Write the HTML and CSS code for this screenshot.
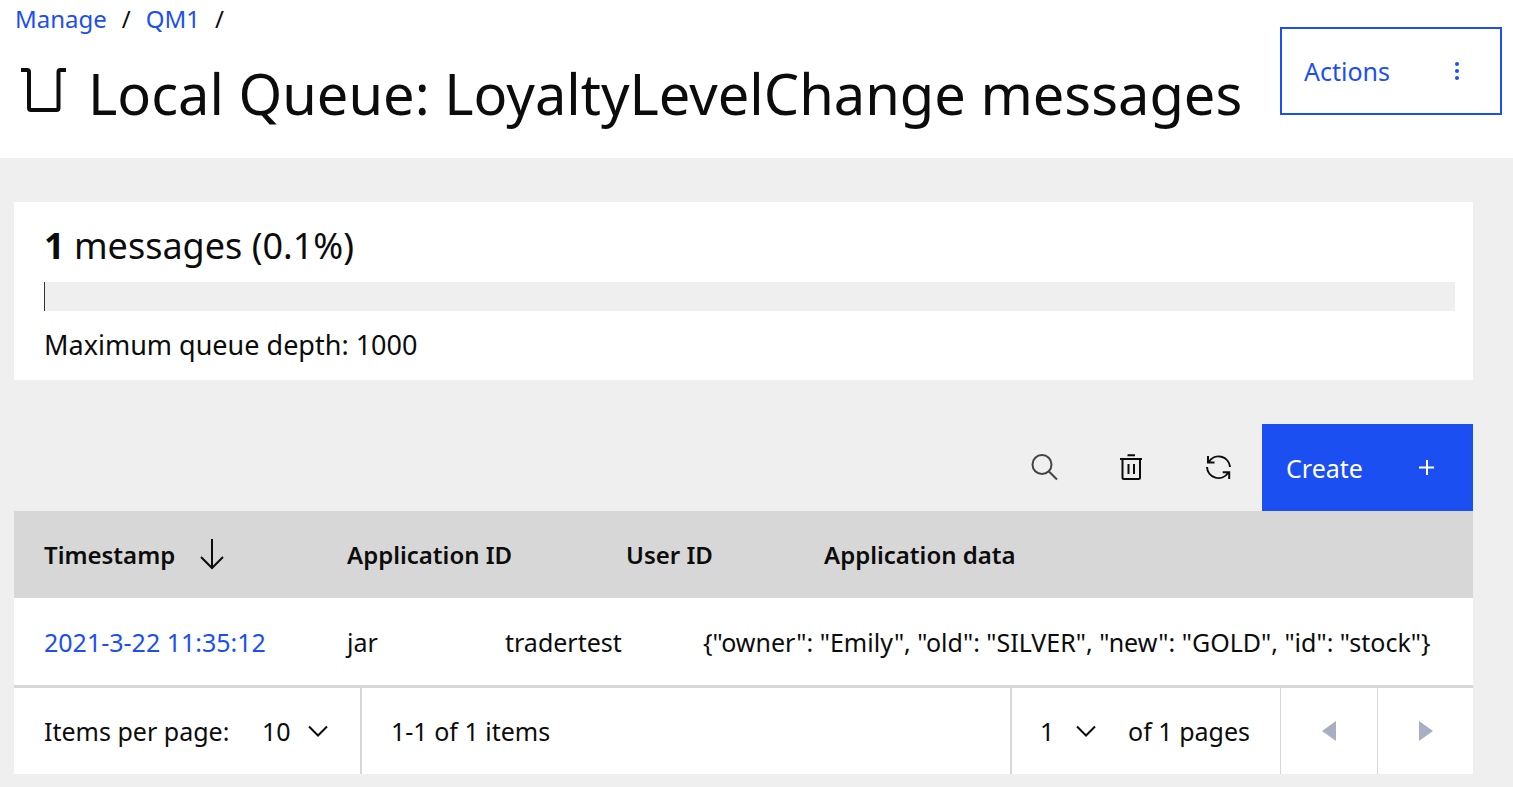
FILE: index.html
```html
<!DOCTYPE html>
<html lang="en">
<head>
<meta charset="utf-8">
<meta name="viewport" content="width=device-width, initial-scale=1">
<title>Local Queue: LoyaltyLevelChange messages</title>
<link rel="stylesheet" href="styles.css">
</head>
<body>
<header class="page-header">
  <div class="heading">
    <nav class="breadcrumb" aria-label="Breadcrumb">
      <a href="#manage">Manage</a><span class="slash">/</span><a href="#qm1">QM1</a><span class="slash">/</span>
    </nav>
    <div class="title-row">
      <svg class="queue-icon" viewBox="0 0 46 46" aria-hidden="true"><path d="M0 2H6Q8 2 8 4V40Q8 42 10 42H35.500Q37.500 42 37.500 40V4Q37.500 2 39.500 2H45" fill="none" stroke="currentColor" stroke-width="4"/></svg>
      <h1>Local Queue: LoyaltyLevelChange messages</h1>
    </div>
  </div>
  <button class="btn btn-outline" type="button">Actions
    <svg class="dots-icon" viewBox="0 0 6 20" aria-hidden="true"><circle cx="3" cy="3" r="2"/><circle cx="3" cy="10" r="2"/><circle cx="3" cy="17" r="2"/></svg>
  </button>
</header>
<main class="content">
  <section class="depth-card">
    <p class="depth-count"><strong>1</strong> messages (0.1%)</p>
    <div class="bar" role="meter" aria-label="Queue depth" aria-valuemin="0" aria-valuemax="1000" aria-valuenow="1"><div class="bar-fill" style="width: 0.1%"></div></div>
    <p class="depth-max">Maximum queue depth: 1000</p>
  </section>
  <div class="toolbar">
    <button class="icon-btn" type="button" aria-label="Search"><svg class="icon search" viewBox="0 0 28 28"><circle cx="11" cy="10.500" r="9.500"/><path d="M17.700 17.200L26 25.500"/></svg></button>
    <button class="icon-btn" type="button" aria-label="Delete"><svg class="icon" viewBox="0 0 28 28"><path d="M2 5H24M9.500 1.200H17M4.500 5V23.500Q4.500 25 6 25H20.500Q22 25 22 23.500V5M10.500 10V20M16 10V20"/></svg></button>
    <button class="icon-btn" type="button" aria-label="Refresh"><svg class="icon" viewBox="0 0 28 28"><path d="M25 13A11.500 11.500 0 0 0 4 7.500L3.200 8.500M3 2V8.500H9.500M2 13A11.500 11.500 0 0 0 23 19L24 18M24.200 25V18.200H17.700"/></svg></button>
    <button class="btn btn-primary" type="button">Create
      <svg class="plus-icon" viewBox="0 0 16 16" aria-hidden="true"><path d="M8 0V15M0 7.500H15"/></svg>
    </button>
  </div>
  <table class="messages">
    <thead>
      <tr>
        <th scope="col">Timestamp <svg class="sort-icon" viewBox="0 0 24 32" aria-hidden="true"><path d="M12 0V29M1 18L12 29L23 18"/></svg></th>
        <th scope="col">Application ID</th>
        <th scope="col">User ID</th>
        <th scope="col">Application data</th>
      </tr>
    </thead>
    <tbody>
      <tr>
        <td><a href="#message">2021-3-22 11:35:12</a></td>
        <td>jar</td>
        <td>tradertest</td>
        <td>{"owner": "Emily", "old": "SILVER", "new": "GOLD", "id": "stock"}</td>
      </tr>
    </tbody>
  </table>
  <div class="pagination">
    <div class="page-size">
      <label for="size">Items per page:</label>
      <span class="select"><select id="size"><option>10</option></select><svg class="chevron" viewBox="0 0 20 12" aria-hidden="true"><path d="M1 1.500L10 10.500L19 1.500"/></svg></span>
    </div>
    <div class="range">1-1 of 1 items</div>
    <div class="page-number">
      <span class="select select-page"><select id="page" aria-label="Page"><option>1</option></select><svg class="chevron" viewBox="0 0 20 12" aria-hidden="true"><path d="M1 1.500L10 10.500L19 1.500"/></svg></span>
      <label for="page">of 1 pages</label>
    </div>
    <button class="pager" type="button" aria-label="Previous page" disabled><svg class="caret" viewBox="0 0 14 20"><path d="M14 0V20L0 10Z"/></svg></button>
    <button class="pager" type="button" aria-label="Next page" disabled><svg class="caret" viewBox="0 0 14 20"><path d="M0 0V20L14 10Z"/></svg></button>
  </div>
</main>
</body>
</html>
```
FILE: styles.css
```css
* { box-sizing: border-box; }
body {
  margin: 0;
  background: #efefef;
  color: #0c0c0c;
  font: 25px/32px "Noto Sans", sans-serif;
}
h1, p { margin: 0; }
a { color: #1c4ff2; text-decoration: none; }
svg { flex: none; }
button, select { font: inherit; color: inherit; border: 0; border-radius: 0; background: none; padding: 0; }

.page-header {
  display: flex;
  justify-content: space-between;
  align-items: flex-start;
  min-height: 158px;
  padding: 3px 11px 0 15px;
  background: #fff;
}
.breadcrumb { display: flex; gap: 15px; font-size: 24px; }
.title-row { display: flex; align-items: flex-start; gap: 21px; padding: 20px 0 0 6px; }
.queue-icon { width: 46px; height: 46px; margin-top: 13px; }
h1 { font-size: 56px; line-height: 76px; font-weight: 400; white-space: nowrap; }

.btn { display: flex; align-items: center; justify-content: space-between; flex: none; text-align: left; }
.btn-outline {
  width: 222px;
  height: 88px;
  margin-top: 24px;
  padding: 0 40px 0 22px;
  border: 2px solid #1c4ff2;
  color: #1c4ff2;
}
.dots-icon { width: 6px; height: 20px; fill: currentColor; }
.btn-primary { width: 211px; height: 87px; padding: 0 38px 0 24px; background: #1c4ff2; color: #fff; }
.plus-icon { width: 16px; height: 16px; fill: none; stroke: currentColor; stroke-width: 2; }

.content { padding: 44px 40px 13px 14px; }
.depth-card { padding: 20px 18px 17px 30px; background: #fff; }
.depth-count { font-size: 36px; line-height: 48px; }
.bar { height: 29px; margin: 12px 0 16px; background: #efefef; }
.bar-fill { height: 100%; background: #333; }
.depth-max { font-size: 27px; line-height: 36px; }

.toolbar { display: flex; justify-content: flex-end; margin-top: 44px; }
.icon-btn { display: grid; place-items: center; width: 87px; height: 87px; }
.icon { width: 28px; height: 28px; fill: none; stroke: currentColor; stroke-width: 2; }
.search { color: #444; }

.messages { display: block; line-height: 32px; }
.messages thead, .messages tbody { display: block; }
.messages tr { display: grid; align-items: center; padding-left: 30px; white-space: nowrap; }
.messages thead tr { grid-template-columns: 303px 279px 198px 1fr; min-height: 87px; background: #d7d7d7; font-size: 24px; }
.messages tbody tr { grid-template-columns: 303px 158px 198px 1fr; min-height: 87px; background: #fff; }
.messages th, .messages td { padding: 0; text-align: left; }
.messages th { display: flex; align-items: center; gap: 25px; font-weight: 600; }
.sort-icon { width: 24px; height: 32px; fill: none; stroke: currentColor; stroke-width: 2; }

.pagination { display: flex; height: 89px; border-top: 3px solid #d7d7d7; background: #fff; }
.pagination > * { display: flex; align-items: center; }
.pagination > * + * { border-left: 2px solid #d7d7d7; }
.page-size { width: 346px; padding-left: 30px; justify-content: space-between; padding-right: 32px; }
.range { flex: 1; padding-left: 29px; }
.page-number { width: 270px; padding: 0 30px 0 28px; justify-content: space-between; }
.pagination > .pager { width: 97px; justify-content: center; border-left-width: 1px; color: #a8afc2; }
.pagination > .pager:last-child { width: 96px; }
.caret { width: 14px; height: 20px; fill: currentColor; }
.select { display: grid; align-items: center; width: 66px; }
.select > * { grid-area: 1 / 1; }
.select-page { width: 56px; }
.select select { appearance: none; width: 100%; }
.chevron { width: 20px; height: 12px; justify-self: end; pointer-events: none; fill: none; stroke: currentColor; stroke-width: 2; }
```
